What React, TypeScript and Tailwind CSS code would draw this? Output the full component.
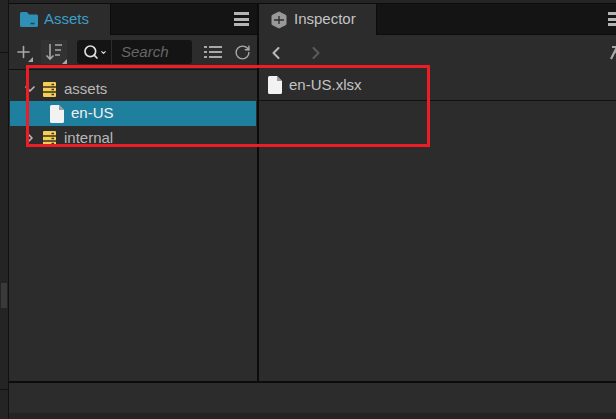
import { ChevronDown, ChevronLeft, ChevronRight, Plus, RotateCw, Search } from "lucide-react";

const font = "font-['Liberation_Sans',Arial,sans-serif]";

function MenuIcon() {
  return (
    <div className="flex w-[15px] flex-col gap-[2.500px]">
      <div className="h-[3px] bg-[#b4b4b4]" />
      <div className="h-[3px] bg-[#b4b4b4]" />
      <div className="h-[3px] bg-[#b4b4b4]" />
    </div>
  );
}

function FileIcon() {
  return (
    <svg width="14" height="18" viewBox="0 0 14 18">
      <path d="M1.500 0H9l5 5v11.500a1.500 1.500 0 0 1-1.500 1.500h-11A1.500 1.500 0 0 1 0 16.500V1.500A1.500 1.500 0 0 1 1.500 0Z" fill="#f2f2f2" />
      <path d="M9 0v5h5" fill="#9a9a9a" />
    </svg>
  );
}

function DbIcon() {
  return (
    <svg width="13" height="15" viewBox="0 0 13 15">
      <rect width="13" height="15" rx="1" fill="#f5cf55" />
      <path d="M0 5h13M0 10h13" stroke="#3a3320" strokeWidth="1.300" />
      <path d="M8.500 2.500h2.500M8.500 7.500h2.500M8.500 12.500h2.500" stroke="#3a3320" strokeWidth="1.300" />
    </svg>
  );
}

function Corner() {
  return <span className="absolute bottom-0 right-0 h-0 w-0 border-b-[5px] border-l-[5px] border-b-[#a8a8a8] border-l-transparent" />;
}

export default function App() {
  return (
    <div className={`${font} relative flex h-[419px] w-[616px] overflow-hidden bg-[#242424] text-[15px]`}>
      <div className="flex w-[9px] shrink-0 flex-col border-r border-[#111]">
        <div className="mt-[52px] h-px w-full bg-[#111]" />
        <div className="ml-px mt-[230px] h-[25px] w-[6px] bg-[#3a3a3a]" />
        <div className="mt-[81px] h-px w-full bg-[#111]" />
      </div>

      <div className="flex h-[413px] min-w-0 flex-1 flex-col pt-[3px]">
        <div className="flex min-h-0 flex-1 border-b-2 border-[#0c0c0c]">
          {/* Assets */}
          <section className="flex w-[250px] shrink-0 flex-col border-r-2 border-[#0c0c0c] bg-[#2c2c2c]">
            <div className="flex h-[32px] shrink-0 border-t border-[#0c0c0c]">
              <div className="flex w-[101px] items-center gap-[6px] pl-[11px] text-[#3a9fc9]">
                <svg width="18" height="15" viewBox="0 0 18 15">
                  <path d="M0 1.500A1.500 1.500 0 0 1 1.500 0H7l2 2.500h7.500A1.500 1.500 0 0 1 18 4v9.500a1.500 1.500 0 0 1-1.500 1.500h-15A1.500 1.500 0 0 1 0 13.500Z" fill="#2f8fb5" />
                  <path d="M10.500 11.500h4" stroke="#16485c" strokeWidth="1.500" />
                </svg>
                Assets
              </div>
              <div className="flex flex-1 items-center justify-end border-b border-l border-[#0c0c0c] bg-[#141414] pr-[8px]">
                <MenuIcon />
              </div>
            </div>

            <div className="flex h-[35px] shrink-0 items-center border-b border-[#111] pl-[5px] text-[#a8a8a8]">
              <div className="relative flex h-[20px] w-[19px] items-center justify-center">
                <Plus size={22} strokeWidth={2} />
                <Corner />
              </div>
              <div className="relative ml-[8px] flex h-[24px] w-[26px] items-center justify-center bg-[#323232]">
                <svg width="18" height="18" viewBox="0 0 18 18" fill="none" stroke="#a8a8a8" strokeWidth="1.600">
                  <path d="M5 1v15M1.500 12.500 5 16l3.500-3.500M10 2h7M10 7h6M10 12h5" />
                </svg>
                <Corner />
              </div>
              <div className="ml-[10px] flex h-[24px] w-[115px] items-center rounded-[3px] bg-[#141414]">
                <div className="flex h-full w-[35px] items-center gap-px border-r border-[#2c2c2c] pl-[6px] text-[#e0e0e0]">
                  <Search size={16} strokeWidth={2.500} />
                  <ChevronDown size={7} strokeWidth={4} />
                </div>
                <span className="pl-[9px] text-[15px] italic text-[#666]">Search</span>
              </div>
              <svg className="ml-[12px]" width="18" height="14" viewBox="0 0 18 14" fill="none" stroke="#a8a8a8" strokeWidth="2">
                <path d="M0 2h3M5 2h13M0 7h3M5 7h13M0 12h3M5 12h13" />
              </svg>
              <RotateCw size={17} strokeWidth={2} className="ml-[12px]" />
            </div>

            <div className="flex flex-col pt-[8px] text-[#b8b8b8]">
              <div className="flex h-[23px] items-center pb-[1px]">
                <ChevronDown size={16} strokeWidth={2.500} className="ml-[13px]" />
                <span className="ml-[5px] flex"><DbIcon /></span>
                <span className="ml-[8px]">assets</span>
              </div>
              <div className="mx-px flex h-[25px] items-center bg-[#1f7f9f] pl-[40px] text-[#f2f2f2]">
                <FileIcon />
                <span className="ml-[7px]">en-US</span>
              </div>
              <div className="flex h-[24px] items-center">
                <ChevronRight size={16} strokeWidth={2.500} className="ml-[13px]" />
                <span className="ml-[5px] flex"><DbIcon /></span>
                <span className="ml-[8px]">internal</span>
              </div>
            </div>
          </section>

          {/* Inspector */}
          <section className="flex min-w-0 flex-1 flex-col bg-[#2c2c2c]">
            <div className="flex h-[32px] shrink-0 border-t border-[#0c0c0c]">
              <div className="flex w-[117px] items-center gap-[7px] pl-[12px] text-[#c4c4c4]">
                <svg width="16" height="18" viewBox="0 0 16 18">
                  <path d="M8 1l7 3.500v9L8 17l-7-3.500v-9Z" fill="#999" stroke="#999" strokeLinejoin="round" />
                  <path d="M3 9h10M8 5v8" stroke="#2c2c2c" strokeWidth="1.300" />
                </svg>
                Inspector
              </div>
              <div className="flex flex-1 items-center justify-end overflow-hidden border-b border-l border-[#0c0c0c] bg-[#141414]">
                <div className="mr-[-7px]"><MenuIcon /></div>
              </div>
            </div>
            <div className="flex h-[35px] shrink-0 items-center justify-between pl-[7px]">
              <div className="flex items-center gap-[20px]">
                <ChevronLeft size={20} strokeWidth={2.500} className="text-[#b8b8b8]" />
                <ChevronRight size={20} strokeWidth={2.500} className="text-[#5a5a5a]" />
              </div>
              <svg className="mr-[-6px]" width="12" height="14" viewBox="0 0 12 14" fill="none" stroke="#a8a8a8" strokeWidth="2.200">
                <path d="M2 1h9M7 1 1 13M6 6l5 5" />
              </svg>
            </div>
            <div className="flex h-[31px] shrink-0 items-center border-b border-[#111] pl-[9px] text-[#c4c4c4]">
              <FileIcon />
              <span className="ml-[7px]">en-US.xlsx</span>
            </div>
          </section>
        </div>
        <div className="h-[30px] shrink-0 bg-[#2c2c2c]" />
      </div>

      {/* annotation */}
      <div className="pointer-events-none absolute left-[26px] top-[65px] h-[82px] w-[404px] border-[3px] border-[#ee1c25]" />
    </div>
  );
}
